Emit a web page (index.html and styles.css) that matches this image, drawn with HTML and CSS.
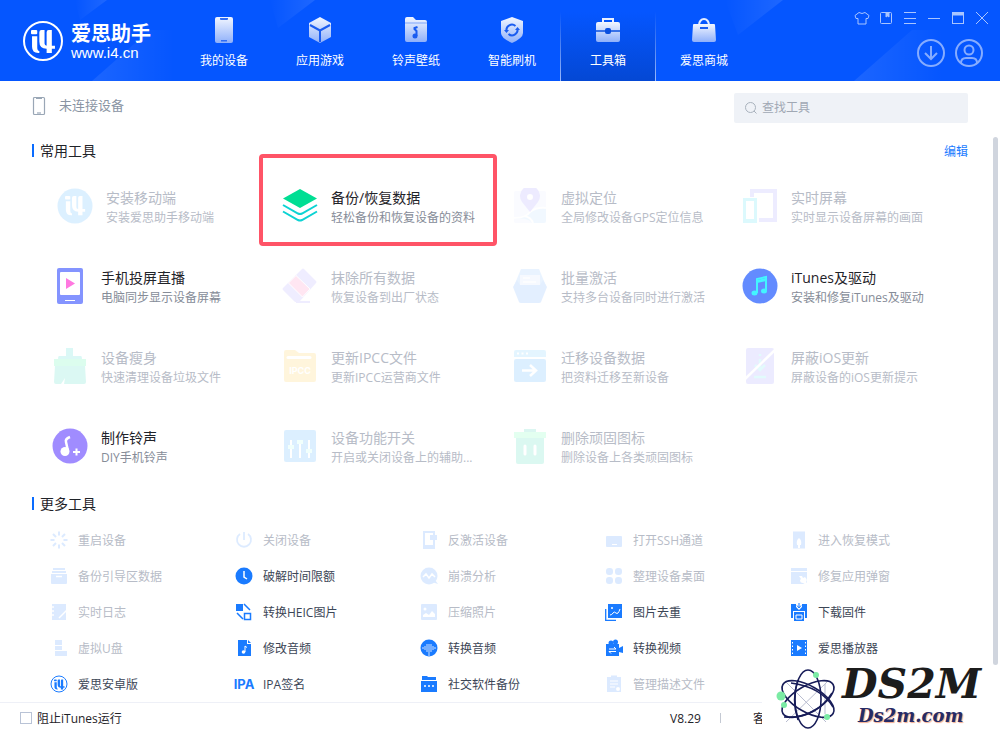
FILE: index.html
```html
<!DOCTYPE html>
<html lang="zh-CN">
<head>
    <meta charset="UTF-8">
    <meta name="viewport" content="width=device-width, initial-scale=1.0">
    <title>爱思助手</title>
    <link rel="stylesheet" href="styles.css">
</head>
<body>
<svg class="defs" width="0" height="0">
    <defs>
        <linearGradient id="navFill" x1="0" y1="0" x2="0" y2="1">
            <stop offset="0" stop-color="#f2f6ff"/>
            <stop offset="1" stop-color="#8fb0fa"/>
        </linearGradient>
        <linearGradient id="beamLeft" x1="0" y1="0" x2="1" y2="0">
            <stop offset="0" stop-color="#fff" stop-opacity="0"/>
            <stop offset="1" stop-color="#fff" stop-opacity=".1"/>
        </linearGradient>
        <linearGradient id="beamRight" x1="0" y1="0" x2="1" y2="0">
            <stop offset="0" stop-color="#fff" stop-opacity=".09"/>
            <stop offset="1" stop-color="#fff" stop-opacity="0"/>
        </linearGradient>
        <symbol id="mark" viewBox="0 0 24 24">
            <rect x="0" y="1" width="6" height="4" rx="1"/>
            <path d="M1 7h5v11q0 3 2 3v2H7q-6 0-6-6z"/>
            <path d="M8 3q0-2 2-2h3v13q0 2 2 2V3q0-2 2-2h3v15h3v3h-3v4h-5v-4q-7 0-7-7z"/>
        </symbol>
    </defs>
</svg>

<div class="app">
    <!-- 顶部导航 -->
    <header class="header">
        <svg class="beams" width="1000" height="81">
            <path d="M75 0h32L80 20z" fill="url(#beamLeft)"/>
            <path d="M92 81L150 30l24 0v51z" fill="url(#beamRight)"/>
            <path d="M270 0h45l-37 28z" fill="url(#beamLeft)"/>
            <path d="M725 0h58l-45 35z" fill="url(#beamLeft)"/>
            <path d="M854 81l58-51h31v51z" fill="url(#beamRight)"/>
        </svg>
        <div class="logo">
            <svg width="40" height="40" viewBox="0 0 40 40">
                <circle cx="20" cy="20" r="19" fill="none" stroke="#fff" stroke-width="2"/>
                <use href="#mark" x="8" y="8" width="25" height="25" fill="#fff"/>
            </svg>
            <div>
                <div class="logo-name">爱思助手</div>
                <div class="logo-url">www.i4.cn</div>
            </div>
        </div>
        <nav class="nav">
            <a class="nav-item" href="#">
                <svg width="26" height="26" viewBox="0 0 26 26"><rect x="4" y="0" width="18" height="26" rx="2" fill="url(#navFill)"/><path d="M9 1h8v1q0 1-1 1h-6q-1 0-1-1zM10 23h6v1.500h-6z" fill="#2f6df5"/></svg>
                我的设备
            </a>
            <a class="nav-item" href="#">
                <svg width="26" height="26" viewBox="0 0 26 26"><path d="M13 0l11 6v14l-11 6-11-6V6z" fill="url(#navFill)"/><path d="M3 8l10 5.500 10-5.500M13 13v12" fill="none" stroke="#1a5cf0" stroke-width="2"/></svg>
                应用游戏
            </a>
            <a class="nav-item" href="#">
                <svg width="26" height="26" viewBox="0 0 26 26"><path d="M2 2q0-2 2-2h6l3 3h9q2 0 2 2v18q0 2-2 2H4q-2 0-2-2z" fill="url(#navFill)"/><path d="M2 6h22" stroke="#7fa5fa"/><circle cx="12" cy="19" r="2.500" fill="#1a5cf0"/><path d="M13.500 19v-5l-2-2V11l3-1" fill="none" stroke="#1a5cf0" stroke-width="2"/></svg>
                铃声壁纸
            </a>
            <a class="nav-item" href="#">
                <svg width="26" height="26" viewBox="0 0 26 26"><path d="M13 0l11 4v12q0 5-11 10Q2 21 2 16V4z" fill="url(#navFill)"/><path d="M7.500 14a5.500 5.500 0 0 1 9-5M18.500 12a5.500 5.500 0 0 1-9 5" fill="none" stroke="#1a5cf0" stroke-width="2"/><path d="M5 13h5l-2.500 3zM16 13h5l-2.500-3z" fill="#1a5cf0"/></svg>
                智能刷机
            </a>
            <a class="nav-item active" href="#">
                <svg width="26" height="26" viewBox="0 0 26 26"><path d="M8 6V2h10v4" fill="none" stroke="#eaf0ff" stroke-width="2"/><rect x="1" y="5" width="24" height="20" rx="2" fill="url(#navFill)"/><path d="M1 14h24" stroke="#0a4fe0" stroke-width="1.500"/><rect x="10" y="11" width="6" height="6" rx="2" fill="#0a4fe0"/></svg>
                工具箱
            </a>
            <a class="nav-item" href="#">
                <svg width="26" height="26" viewBox="0 0 26 26"><path d="M8 8a5 6 0 0 1 10 0" fill="none" stroke="#e4ecff" stroke-width="2"/><path d="M3 7h20q1 0 1 1l1 15q0 2-2 2H3q-2 0-2-2L2 8q0-1 1-1z" fill="url(#navFill)"/><path d="M9 11h8" stroke="#1a5cf0" stroke-width="2"/></svg>
                爱思商城
            </a>
        </nav>
        <div class="header-right">
            <div class="window-buttons">
                <button aria-label="皮肤"><svg width="16" height="16" viewBox="0 0 16 16"><path d="M5 2.500q3 2 6 0l4 3-1 3-2 0V14H4V8.500H2l-1-3z"/></svg></button>
                <button aria-label="手册"><svg width="16" height="16" viewBox="0 0 16 16"><rect x="2.500" y="2.500" width="11" height="11" rx="1"/><path d="M8 3v4l1.500-1L11 7V3z" fill="#a9c5ff"/></svg></button>
                <button aria-label="菜单"><svg width="16" height="16" viewBox="0 0 16 16"><path d="M2 2.500h12M2 8.500h12M2 13.500h12"/></svg></button>
                <button aria-label="最小化"><svg width="16" height="16" viewBox="0 0 16 16"><path d="M2 8.500h12"/></svg></button>
                <button aria-label="最大化"><svg width="16" height="16" viewBox="0 0 16 16"><rect x="2.500" y="2.500" width="11" height="11"/><path d="M2 4h12" stroke-width="3"/></svg></button>
                <button aria-label="关闭"><svg width="16" height="16" viewBox="0 0 16 16"><path d="M2 2l12 12M14 2L2 14"/></svg></button>
            </div>
            <div class="user-buttons">
                <button aria-label="下载"><svg width="28" height="28" viewBox="0 0 28 28"><circle cx="14" cy="14" r="13"/><path d="M14 7v13M8 14l6 6 6-6"/></svg></button>
                <button aria-label="账号"><svg width="28" height="28" viewBox="0 0 28 28"><circle cx="14" cy="14" r="13"/><circle cx="14" cy="11" r="4.500"/><path d="M6 24q0-5 5-5h6q5 0 5 5"/></svg></button>
            </div>
        </div>
    </header>

    <!-- 设备状态和搜索 -->
    <div class="status">
        <svg width="14" height="20" viewBox="0 0 14 20"><rect x="1.500" y="1.500" width="11" height="17" rx="1" fill="none" stroke="#9aa7b6" stroke-width="1.200"/><path d="M4 2.500h6" stroke="#9aa7b6"/><path d="M5 17h4" stroke="#c3cbd5" stroke-width="2"/></svg>
        <span class="status-text">未连接设备</span>
        <label class="search">
            <svg width="14" height="14" viewBox="0 0 14 14"><circle cx="6.500" cy="6.500" r="5" fill="none" stroke="#a9b2bd"/><path d="M10 10l2.500 2.500" stroke="#a9b2bd"/></svg>
            <input type="text" placeholder="查找工具" aria-label="查找工具">
        </label>
    </div>

    <main class="content">
        <!-- 常用工具 -->
        <section>
            <div class="section-head">
                <h2>常用工具</h2>
                <a class="edit" href="#">编辑</a>
            </div>
            <div class="tools">
                <button class="tool off hover">
                    <svg viewBox="0 0 36 36"><circle cx="18" cy="18" r="17.500" fill="#1e9fff"/><use href="#mark" x="8" y="7" width="21" height="21" fill="#fff"/></svg>
                    <span><b>安装移动端</b><i>安装爱思助手移动端</i></span>
                </button>
                <button class="tool marked">
                    <svg viewBox="0 0 36 36"><path d="M18 1l17 9.500L18 20 1 10.500z" fill="#00de93"/><path d="M1 17l15 8.500q2 1 4 0L35 17M1 23.500L16 32q2 1 4 0l15-8.500" fill="none" stroke="#0cd3d3" stroke-width="2"/></svg>
                    <span><b>备份/恢复数据</b><i>轻松备份和恢复设备的资料</i></span>
                </button>
                <button class="tool off">
                    <svg viewBox="0 0 36 36"><rect x="2" y="3" width="32" height="32" rx="2" fill="#dfe8ff"/><path d="M2 30q12 0 16-6 6-5 16-4v13q0 2-2 2H20q-4-6-18-4z" fill="#8fd0ff" opacity=".7"/><path d="M2 30q12 0 16-6 6-5 16-4M12 28q7 1 9 7" stroke="#fff" stroke-width="2" fill="none"/><path d="M18 24L10 14a10 10 0 1 1 16 0z" fill="#8e80ff"/><circle cx="18" cy="9" r="3" fill="#fff"/></svg>
                    <span><b>虚拟定位</b><i>全局修改设备GPS定位信息</i></span>
                </button>
                <button class="tool off">
                    <svg viewBox="0 0 36 36"><rect x="10" y="3" width="23" height="29" fill="#fff" stroke="#8e85ff" stroke-width="4"/><rect x="0" y="9" width="17" height="27" fill="#fff"/><rect x="2.500" y="11.500" width="11" height="21" fill="#fff" stroke="#1adcf5" stroke-width="3"/><path d="M1 32h14v3H1z" fill="#1adcf5"/></svg>
                    <span><b>实时屏幕</b><i>实时显示设备屏幕的画面</i></span>
                </button>

                <button class="tool">
                    <svg viewBox="0 0 36 36"><rect x="5" y="0" width="26" height="36" rx="2" fill="#8494ff"/><rect x="8" y="4" width="20" height="23" rx="1" fill="#fff"/><path d="M14 10l9 5.500-9 5.500z" fill="#ff78e0"/><path d="M13 32.500h10" stroke="#fff"/></svg>
                    <span><b>手机投屏直播</b><i>电脑同步显示设备屏幕</i></span>
                </button>
                <button class="tool off">
                    <svg viewBox="0 0 36 36"><path d="M20 1q1-1 2 0l12 12q1 1 0 2L18 33q-1 1-2 1h-3L1 22q-1-1 0-2z" fill="#9c8cff"/><path d="M14 7.500L28 21l-7.500 8L6.500 15z" fill="#ff5cab" stroke="#fff"/><path d="M14 34h14" stroke="#9c8cff" stroke-width="2"/></svg>
                    <span><b>抹除所有数据</b><i>恢复设备到出厂状态</i></span>
                </button>
                <button class="tool off">
                    <svg viewBox="0 0 36 36"><path d="M9 1h18l7 17H2z" fill="#6fb5ff"/><path d="M8 7h20v10H8z" fill="#c4deff"/><path d="M11 10h7M11 14h13" stroke="#fff" stroke-width="1.500"/><path d="M5 12l3 5h20l3-5 4 7-6 15q-.5 1-2 1H9q-1.500 0-2-1L1 19z" fill="#4b9cff"/></svg>
                    <span><b>批量激活</b><i>支持多台设备同时进行激活</i></span>
                </button>
                <button class="tool">
                    <svg viewBox="0 0 36 36"><circle cx="18" cy="18" r="17.500" fill="#638bff"/><path d="M15 25V11l9-2v13" fill="none" stroke="#43f5ff" stroke-width="2"/><path d="M15 12l9-2v3l-9 2z" fill="#43f5ff"/><ellipse cx="12.500" cy="25" rx="3" ry="2.500" fill="#43f5ff"/><ellipse cx="22" cy="23" rx="3" ry="2.500" fill="#43f5ff"/></svg>
                    <span><b>iTunes及驱动</b><i>安装和修复iTunes及驱动</i></span>
                </button>

                <button class="tool off">
                    <svg viewBox="0 0 36 36"><path d="M14 0h7v8h8q1 0 1 3H6q0-3 1-3h7z" fill="#16d6c5"/><path d="M2 11h32v7H2z" fill="#1bf595"/><path d="M3 18h30l1 16q0 2-2 2H12l1-6-4 6H4q-2 0-2-2z" fill="#16d6b5"/></svg>
                    <span><b>设备瘦身</b><i>快速清理设备垃圾文件</i></span>
                </button>
                <button class="tool off">
                    <svg viewBox="0 0 36 36"><path d="M2 4q0-2 2-2h9l4 3h15q2 0 2 2v25q0 2-2 2H4q-2 0-2-2z" fill="#ffc21e"/><path d="M6 9.500h22" stroke="#fff" stroke-width="3" stroke-linecap="round"/><text x="18" y="26" class="ipcc" text-anchor="middle">IPCC</text></svg>
                    <span><b>更新IPCC文件</b><i>更新IPCC运营商文件</i></span>
                </button>
                <button class="tool off">
                    <svg viewBox="0 0 36 36"><path d="M2 4q0-2 2-2h28q2 0 2 2v5H2z" fill="#4fc3ff"/><path d="M5 5.500h2M9.500 5.500h2M14 5.500h2" stroke="#fff" stroke-width="2"/><rect x="2" y="11" width="32" height="23" rx="2" fill="#1f9bff"/><path d="M10 22.500h13M18 17l6 5.500-6 5.500" fill="none" stroke="#fff" stroke-width="2.500"/></svg>
                    <span><b>迁移设备数据</b><i>把资料迁移至新设备</i></span>
                </button>
                <button class="tool off">
                    <svg viewBox="0 0 36 36"><rect x="4" y="0" width="28" height="36" rx="2" fill="#8580ff"/><path d="M18 6v2M18 11v11M13 17l5 5 5-5M12 29h12" fill="none" stroke="#43e6f0" stroke-width="2.500"/><path d="M3 31L33 2" stroke="#fff" stroke-width="2.500"/></svg>
                    <span><b>屏蔽iOS更新</b><i>屏蔽设备的iOS更新提示</i></span>
                </button>

                <button class="tool">
                    <svg viewBox="0 0 36 36"><circle cx="18" cy="18" r="17.500" fill="#a08cff"/><path d="M16 23l-2-9q-1-3 4-5" fill="none" stroke="#fff" stroke-width="2.500"/><circle cx="13" cy="23.500" r="4.500" fill="#fff"/><path d="M21 24h7M24.500 20.500v7" stroke="#fff" stroke-width="2"/></svg>
                    <span><b>制作铃声</b><i>DIY手机铃声</i></span>
                </button>
                <button class="tool off">
                    <svg viewBox="0 0 36 36"><rect x="2" y="2" width="32" height="32" rx="2" fill="#1f9bff"/><path d="M9 12v18M18 12v18M27 12v18" stroke="#fff" stroke-width="2"/><path d="M6 17h6v4H6zM15 12h6v4h-6zM24 21h6v4h-6z" fill="#a5fff0"/></svg>
                    <span><b>设备功能开关</b><i>开启或关闭设备上的辅助...</i></span>
                </button>
                <button class="tool off">
                    <svg viewBox="0 0 36 36"><path d="M12 1h12v4H12z" fill="#16c9a5"/><path d="M4 9h28v25q0 2-2 2H6q-2 0-2-2z" fill="#16d6a5"/><path d="M2 4h32v6H2z" fill="#4dff9e"/><path d="M13 18v8M23 18v8" stroke="#fff" stroke-width="3" stroke-linecap="round"/></svg>
                    <span><b>删除顽固图标</b><i>删除设备上各类顽固图标</i></span>
                </button>
            </div>
        </section>

        <!-- 更多工具 -->
        <section class="more">
            <div class="section-head">
                <h2>更多工具</h2>
            </div>
            <div class="list">
                <button class="link off"><svg viewBox="0 0 18 18"><path d="M9 0.500v4M9 13.500v4M0.500 9h4M13.500 9h4M3 3l3 3M12 12l3 3M15 3l-3 3M6 12l-3 3" stroke="#1a7bff" stroke-width="2"/></svg>重启设备</button>
                <button class="link off"><svg viewBox="0 0 18 18"><path d="M5 3a7 7 0 1 0 8 0M9 1v8" fill="none" stroke="#1a7bff" stroke-width="1.800"/></svg>关闭设备</button>
                <button class="link off"><svg viewBox="0 0 18 18"><path d="M4 1h10v15H4z" fill="none" stroke="#1a7bff" stroke-width="2"/><path d="M3 14h12v4H3zM10 4h7v5h-7z" fill="#1a7bff"/></svg>反激活设备</button>
                <button class="link off"><svg viewBox="0 0 18 18"><rect x="1" y="5" width="16" height="11" rx="1" fill="#1a7bff"/><path d="M7 13.500h5" stroke="#fff"/></svg>打开SSH通道</button>
                <button class="link off"><svg viewBox="0 0 18 18"><path d="M3 0.500h12v17H3z" fill="#1a7bff"/><path d="M9 7q3 2 2 7l-1 0v3H8v-3l-1 0q-1-5 2-7z" fill="#fff"/></svg>进入恢复模式</button>

                <button class="link off"><svg viewBox="0 0 18 18"><path d="M3 1h12v2H3zM2 4h14v2H2zM1 7h16v9q0 1-1 1H2q-1 0-1-1z" fill="#1a7bff"/><path d="M6 9.500h6" stroke="#fff" stroke-width="1.500"/></svg>备份引导区数据</button>
                <button class="link"><svg viewBox="0 0 18 18"><circle cx="9" cy="9" r="8.500" fill="#1a7bff"/><path d="M9 4v6l3 2" fill="none" stroke="#fff" stroke-width="1.500"/></svg>破解时间限额</button>
                <button class="link off"><svg viewBox="0 0 18 18"><circle cx="9" cy="9" r="8.500" fill="#1a7bff"/><path d="M12 15l3-2 3 4z" fill="#1a7bff"/><path d="M3 10l3-3 3 4 3-4 3 3" fill="none" stroke="#fff" stroke-width="1.500"/></svg>崩溃分析</button>
                <button class="link off"><svg viewBox="0 0 18 18" fill="#1a7bff"><rect x="1" y="1" width="7" height="7" rx="3"/><rect x="10" y="1" width="7" height="7" rx="3"/><rect x="1" y="10" width="7" height="7" rx="3"/><rect x="10" y="10" width="7" height="7" rx="3"/></svg>整理设备桌面</button>
                <button class="link off"><svg viewBox="0 0 18 18"><path d="M1 1h16v3H1zM1 5h16v12H1z" fill="#1a7bff"/><path d="M9 9l3 0 1 2 2-1q3 3 1 5l2 2-2 1-3-2q-3 0-3-3l1-1z" fill="#fff"/></svg>修复应用弹窗</button>

                <button class="link off"><svg viewBox="0 0 18 18"><path d="M2 1h14v16H2z" fill="#1a7bff"/><path d="M0 4h4M0 8h4M0 12h4M9 15l8-8" stroke="#fff" stroke-width="1.500"/></svg>实时日志</button>
                <button class="link"><svg viewBox="0 0 18 18"><path d="M1 1h7v7H1z" fill="#1a7bff"/><path d="M9.500 10.500h6v6h-6zM9 1l6 6M2 10l6 6" fill="none" stroke="#1a7bff" stroke-width="1.500"/></svg>转换HEIC图片</button>
                <button class="link off"><svg viewBox="0 0 18 18"><rect x="1" y="1" width="16" height="16" rx="1" fill="#1a7bff"/><path d="M3 14v-2l3-2 3 2 3-4 3 3v3z" fill="#fff"/><circle cx="5" cy="6" r="1.500" fill="#fff"/></svg>压缩照片</button>
                <button class="link"><svg viewBox="0 0 18 18"><path d="M3 1h14v14H3z" fill="#1a7bff"/><path d="M.7 6v11.300H11" fill="none" stroke="#1a7bff" stroke-width="1.300"/><path d="M5 12q2 0 3-2t3 0 4-4" fill="none" stroke="#fff"/><circle cx="7" cy="5" r="1" fill="#fff"/></svg>图片去重</button>
                <button class="link"><svg viewBox="0 0 18 18"><path d="M1 1h5v3l3 3 3-3V1h5v14h-2V8H3v7H1z" fill="#1a7bff"/><path d="M9 0v4M7 2.500L9 5l2-2.500" stroke="#1a7bff" fill="none"/><path d="M4 9h10v9H4z" fill="#1a7bff"/><path d="M6 12h6v4H6z" fill="none" stroke="#fff"/></svg>下载固件</button>

                <button class="link off"><svg viewBox="0 0 18 18"><path d="M5 1h7v5H5zM5 7h7v4h5v6H5z" fill="#1a7bff"/><path d="M5 11.500h12" stroke="#fff"/></svg>虚拟U盘</button>
                <button class="link"><svg viewBox="0 0 18 18"><path d="M3 1h9v4h4v12H3z" fill="#1a7bff"/><path d="M13 1l3 3h-3z" fill="#1a7bff"/><path d="M10 13V7l2 1.500" fill="none" stroke="#fff"/><circle cx="8.500" cy="13" r="1.800" fill="#fff"/></svg>修改音频</button>
                <button class="link"><svg viewBox="0 0 18 18"><circle cx="9" cy="9" r="8.500" fill="#1a7bff"/><path d="M3 8v2M5 7v4M7 5v8M9 5v12M11 5v8M13 7v4M15 8v2" stroke="#cfe2ff"/></svg>转换音频</button>
                <button class="link"><svg viewBox="0 0 18 18"><circle cx="6" cy="4" r="2.500" fill="#1a7bff"/><circle cx="10.500" cy="3" r="2.500" fill="#1a7bff"/><path d="M1 5h13v4l4-2v7l-4-1v4H1z" fill="#1a7bff"/><path d="M4 10h7l-2-2M11 12.500H4l2 2" fill="none" stroke="#fff"/></svg>转换视频</button>
                <button class="link"><svg viewBox="0 0 18 18"><path d="M1 1h16v16H1z" fill="#1a7bff"/><path d="M2.500 3v13M15.500 3v13" stroke="#fff" stroke-dasharray="1.500 2"/><path d="M7 6l5 3-5 3z" fill="#fff"/></svg>爱思播放器</button>

                <button class="link"><svg viewBox="0 0 18 18"><circle cx="9" cy="9" r="8" fill="none" stroke="#1a7bff"/><use href="#mark" x="4" y="4" width="11" height="11" fill="#1a7bff"/></svg>爱思安卓版</button>
                <button class="link"><svg viewBox="0 0 18 18"><text x="9" y="14" class="ipa" text-anchor="middle">IPA</text></svg>IPA签名</button>
                <button class="link"><svg viewBox="0 0 18 18"><path d="M2 1h5l1 1h8v3H2zM1 6h16v11H1z" fill="#1a7bff"/><path d="M4 11h2M8 11h2M12 11h2" stroke="#fff" stroke-width="1.500"/></svg>社交软件备份</button>
                <button class="link off"><svg viewBox="0 0 18 18"><path d="M2 2h4V0.500h6V2h4v15H2z" fill="#1a7bff"/><path d="M5 6h8M5 9h8M5 12h5" stroke="#fff"/><circle cx="13" cy="14" r="2" fill="#fff"/></svg>管理描述文件</button>
            </div>
        </section>
        <div class="scrollbar"></div>
    </main>

    <!-- 底部状态栏 -->
    <footer class="footer">
        <label><input type="checkbox">阻止iTunes运行</label>
        <div class="footer-info">
            <span>V8.29</span>
            <span class="divider"></span>
            <span>客</span>
        </div>
    </footer>

    <!-- 右下角站点标识 -->
    <div class="site">
        <svg width="64" height="64" viewBox="0 0 64 64">
            <g fill="none" stroke="#b9bdd0"><path d="M10 15l40 40M51 15L10 55M49 17v30"/></g>
            <g fill="none" stroke="#171c58" stroke-width="1.600">
                <ellipse cx="32" cy="32" rx="13" ry="29"/>
                <ellipse cx="32" cy="32" rx="13" ry="29" transform="rotate(60 32 32)"/>
                <ellipse cx="32" cy="32" rx="13" ry="29" transform="rotate(-60 32 32)"/>
            </g>
            <path d="M22 13q-7 20 0 40M15 16q30 4 42 24M8 50q32 2 48-24" fill="none" stroke="#171c58" stroke-width="1.500"/>
            <g fill="#7beba4"><circle cx="5" cy="29" r="4.500"/><circle cx="8" cy="38" r="3"/><circle cx="40" cy="8" r="3"/><circle cx="51" cy="50" r="3"/></g>
        </svg>
        <div class="site-text">
            <div class="site-name">DS2M</div>
            <div class="site-url">Ds2m.com</div>
        </div>
    </div>
</div>
</body>
</html>
```
FILE: styles.css
```css
* {
    box-sizing: border-box;
}

body {
    margin: 0;
    font-family: "Open Sans", "Noto Sans CJK SC", sans-serif;
    font-size: 12px;
    color: #1f2329;
    background: #fff;
}

button {
    padding: 0;
    border: none;
    background: none;
    font: inherit;
    color: inherit;
    text-align: left;
    cursor: pointer;
}

a {
    text-decoration: none;
}

.defs {
    position: absolute;
}

.app {
    position: relative;
    display: flex;
    flex-direction: column;
    height: 100vh;
    overflow: hidden;
}

/* 顶部导航 */
.header {
    position: relative;
    display: flex;
    flex: none;
    height: 81px;
    background: #0556ff;
    color: #fff;
}

.beams {
    position: absolute;
    left: 0;
    top: 0;
}

.logo {
    display: flex;
    align-items: center;
    gap: 8px;
    width: 176px;
    padding-left: 23px;
}

.logo-name {
    font-size: 20px;
    font-weight: 700;
    line-height: 24px;
}

.logo-url {
    font-family: "Liberation Sans", sans-serif;
    font-size: 15px;
    line-height: 14px;
}

.nav {
    display: flex;
    position: relative;
}

.nav-item {
    display: flex;
    flex-direction: column;
    align-items: center;
    gap: 10px;
    width: 96px;
    padding-top: 17px;
    line-height: 16px;
    color: #fff;
}

.nav-item.active {
    background: linear-gradient(#0556ff 15%, #0448d4);
    border: solid;
    border-width: 0 1px;
    border-image: linear-gradient(rgba(255,255,255,0) 15%, #9dbcff) 1;
}

.header-right {
    position: relative;
    display: flex;
    flex-direction: column;
    align-items: flex-end;
    gap: 9px;
    margin-left: auto;
    padding-top: 6px;
}

.header-right svg {
    display: block;
    fill: none;
    stroke: #86acff;
}

.window-buttons {
    display: flex;
    padding-right: 6px;
}

.window-buttons button {
    width: 24px;
    height: 24px;
    padding: 4px;
}

.window-buttons svg {
    stroke: #a9c5ff;
}

.user-buttons {
    display: flex;
    gap: 10px;
    padding-right: 17px;
}

.user-buttons svg {
    stroke-width: 2;
}

/* 设备状态和搜索 */
.status {
    display: flex;
    align-items: flex-start;
    flex: none;
    height: 56px;
    padding: 12px 32px;
}

.status > svg {
    margin-top: 3px;
}

.status-text {
    margin-left: 13px;
    font-size: 13px;
    line-height: 24px;
    color: #8a94a3;
}

.search {
    display: flex;
    align-items: center;
    gap: 4px;
    width: 234px;
    height: 30px;
    margin-left: auto;
    padding: 0 10px;
    border-radius: 2px;
    background: #eff2f7;
}

.search input {
    flex: 1;
    min-width: 0;
    height: 28px;
    padding: 0 0 2px;
    border: none;
    outline: none;
    background: none;
    font: inherit;
}

.search input::placeholder {
    color: #a0a8b4;
}

/* 工具区 */
.content {
    position: relative;
    flex: 1;
    min-height: 0;
    overflow: hidden;
}

.section-head {
    display: flex;
    align-items: center;
    justify-content: space-between;
    height: 27px;
    padding: 0 32px;
}

.section-head h2 {
    margin: 0;
    padding-left: 6px;
    border-left: 2px solid #0a6cff;
    font-size: 14px;
    font-weight: 400;
    line-height: 13px;
}

.edit {
    color: #1a7bff;
}

.tools {
    display: grid;
    grid-template-columns: repeat(4, 1fr);
    grid-auto-rows: 80px;
    padding: 2px 40px;
}

.tool {
    position: relative;
    display: flex;
    align-items: center;
    gap: 13px;
    padding-left: 12px;
    white-space: nowrap;
}

.tool svg {
    flex: none;
    width: 36px;
    height: 36px;
}

.tool span {
    padding-top: 3px;
}

.tool b,
.tool i {
    display: block;
    font-style: normal;
    font-weight: 400;
    line-height: 20px;
}

.tool b {
    font-size: 14px;
}

.tool i {
    color: #868c98;
}

.tool.hover {
    padding-left: 17px;
}

/* 红色标记框 */
.marked::after {
    content: "";
    position: absolute;
    top: -12px;
    bottom: 0;
    left: -11px;
    right: 3px;
    border: 4px solid #ff5467;
    border-radius: 4px;
}

.off,
.tool.off i {
    color: #b7bcc7;
}

.off svg {
    opacity: .15;
}

.ipcc {
    fill: #fff;
    font-family: Inter, sans-serif;
    font-size: 9px;
    font-weight: 700;
}

/* 更多工具 */
.more {
    padding-top: 2px;
}

.list {
    display: grid;
    grid-template-columns: repeat(5, 1fr);
    grid-auto-rows: 36px;
    padding: 5px 35px 0 40px;
}

.link {
    display: flex;
    align-items: center;
    gap: 10px;
    padding-left: 10px;
    white-space: nowrap;
    color: #3c4656;
}

.link.off {
    color: #b7bcc7;
}

.link svg {
    flex: none;
    width: 18px;
    height: 18px;
    overflow: visible;
}

.ipa {
    fill: #1a7bff;
    font-family: Inter, sans-serif;
    font-size: 13px;
    font-weight: 700;
}

.scrollbar {
    position: absolute;
    top: 0;
    right: 2px;
    width: 5px;
    height: 93.5%;
    border-radius: 3px;
    background: #d0d5de;
}

/* 底部状态栏 */
.footer {
    display: flex;
    align-items: center;
    justify-content: space-between;
    flex: none;
    height: 31px;
    padding: 0 235px 0 20px;
    border-top: 1px solid #eef0f7;
}

.footer label {
    display: flex;
    align-items: center;
    gap: 5px;
}

.footer input {
    width: 12px;
    height: 12px;
    margin: 0;
    appearance: none;
    border: 1px solid #b9c3d6;
}

.footer-info {
    display: flex;
    align-items: center;
}

.divider {
    width: 1px;
    height: 10px;
    margin: 0 32px 0 19px;
    background: #c4c9d3;
}

/* 右下角站点标识 */
.site {
    position: absolute;
    right: 0;
    bottom: 0;
    display: flex;
    gap: 2px;
    width: 238px;
    height: 68px;
    padding: 2px 0 0 14px;
    background: #fff;
}

.site-text {
    font-family: "DejaVu Serif", serif;
    font-weight: 700;
    font-style: italic;
}

.site-name {
    font-size: 41px;
    line-height: 35px;
    color: #1c1c1c;
}

.site-url {
    padding-left: 16px;
    font-size: 18px;
    line-height: 28px;
    color: #262b66;
    text-shadow: 1px 1px 1px #f3a98c;
}
```
